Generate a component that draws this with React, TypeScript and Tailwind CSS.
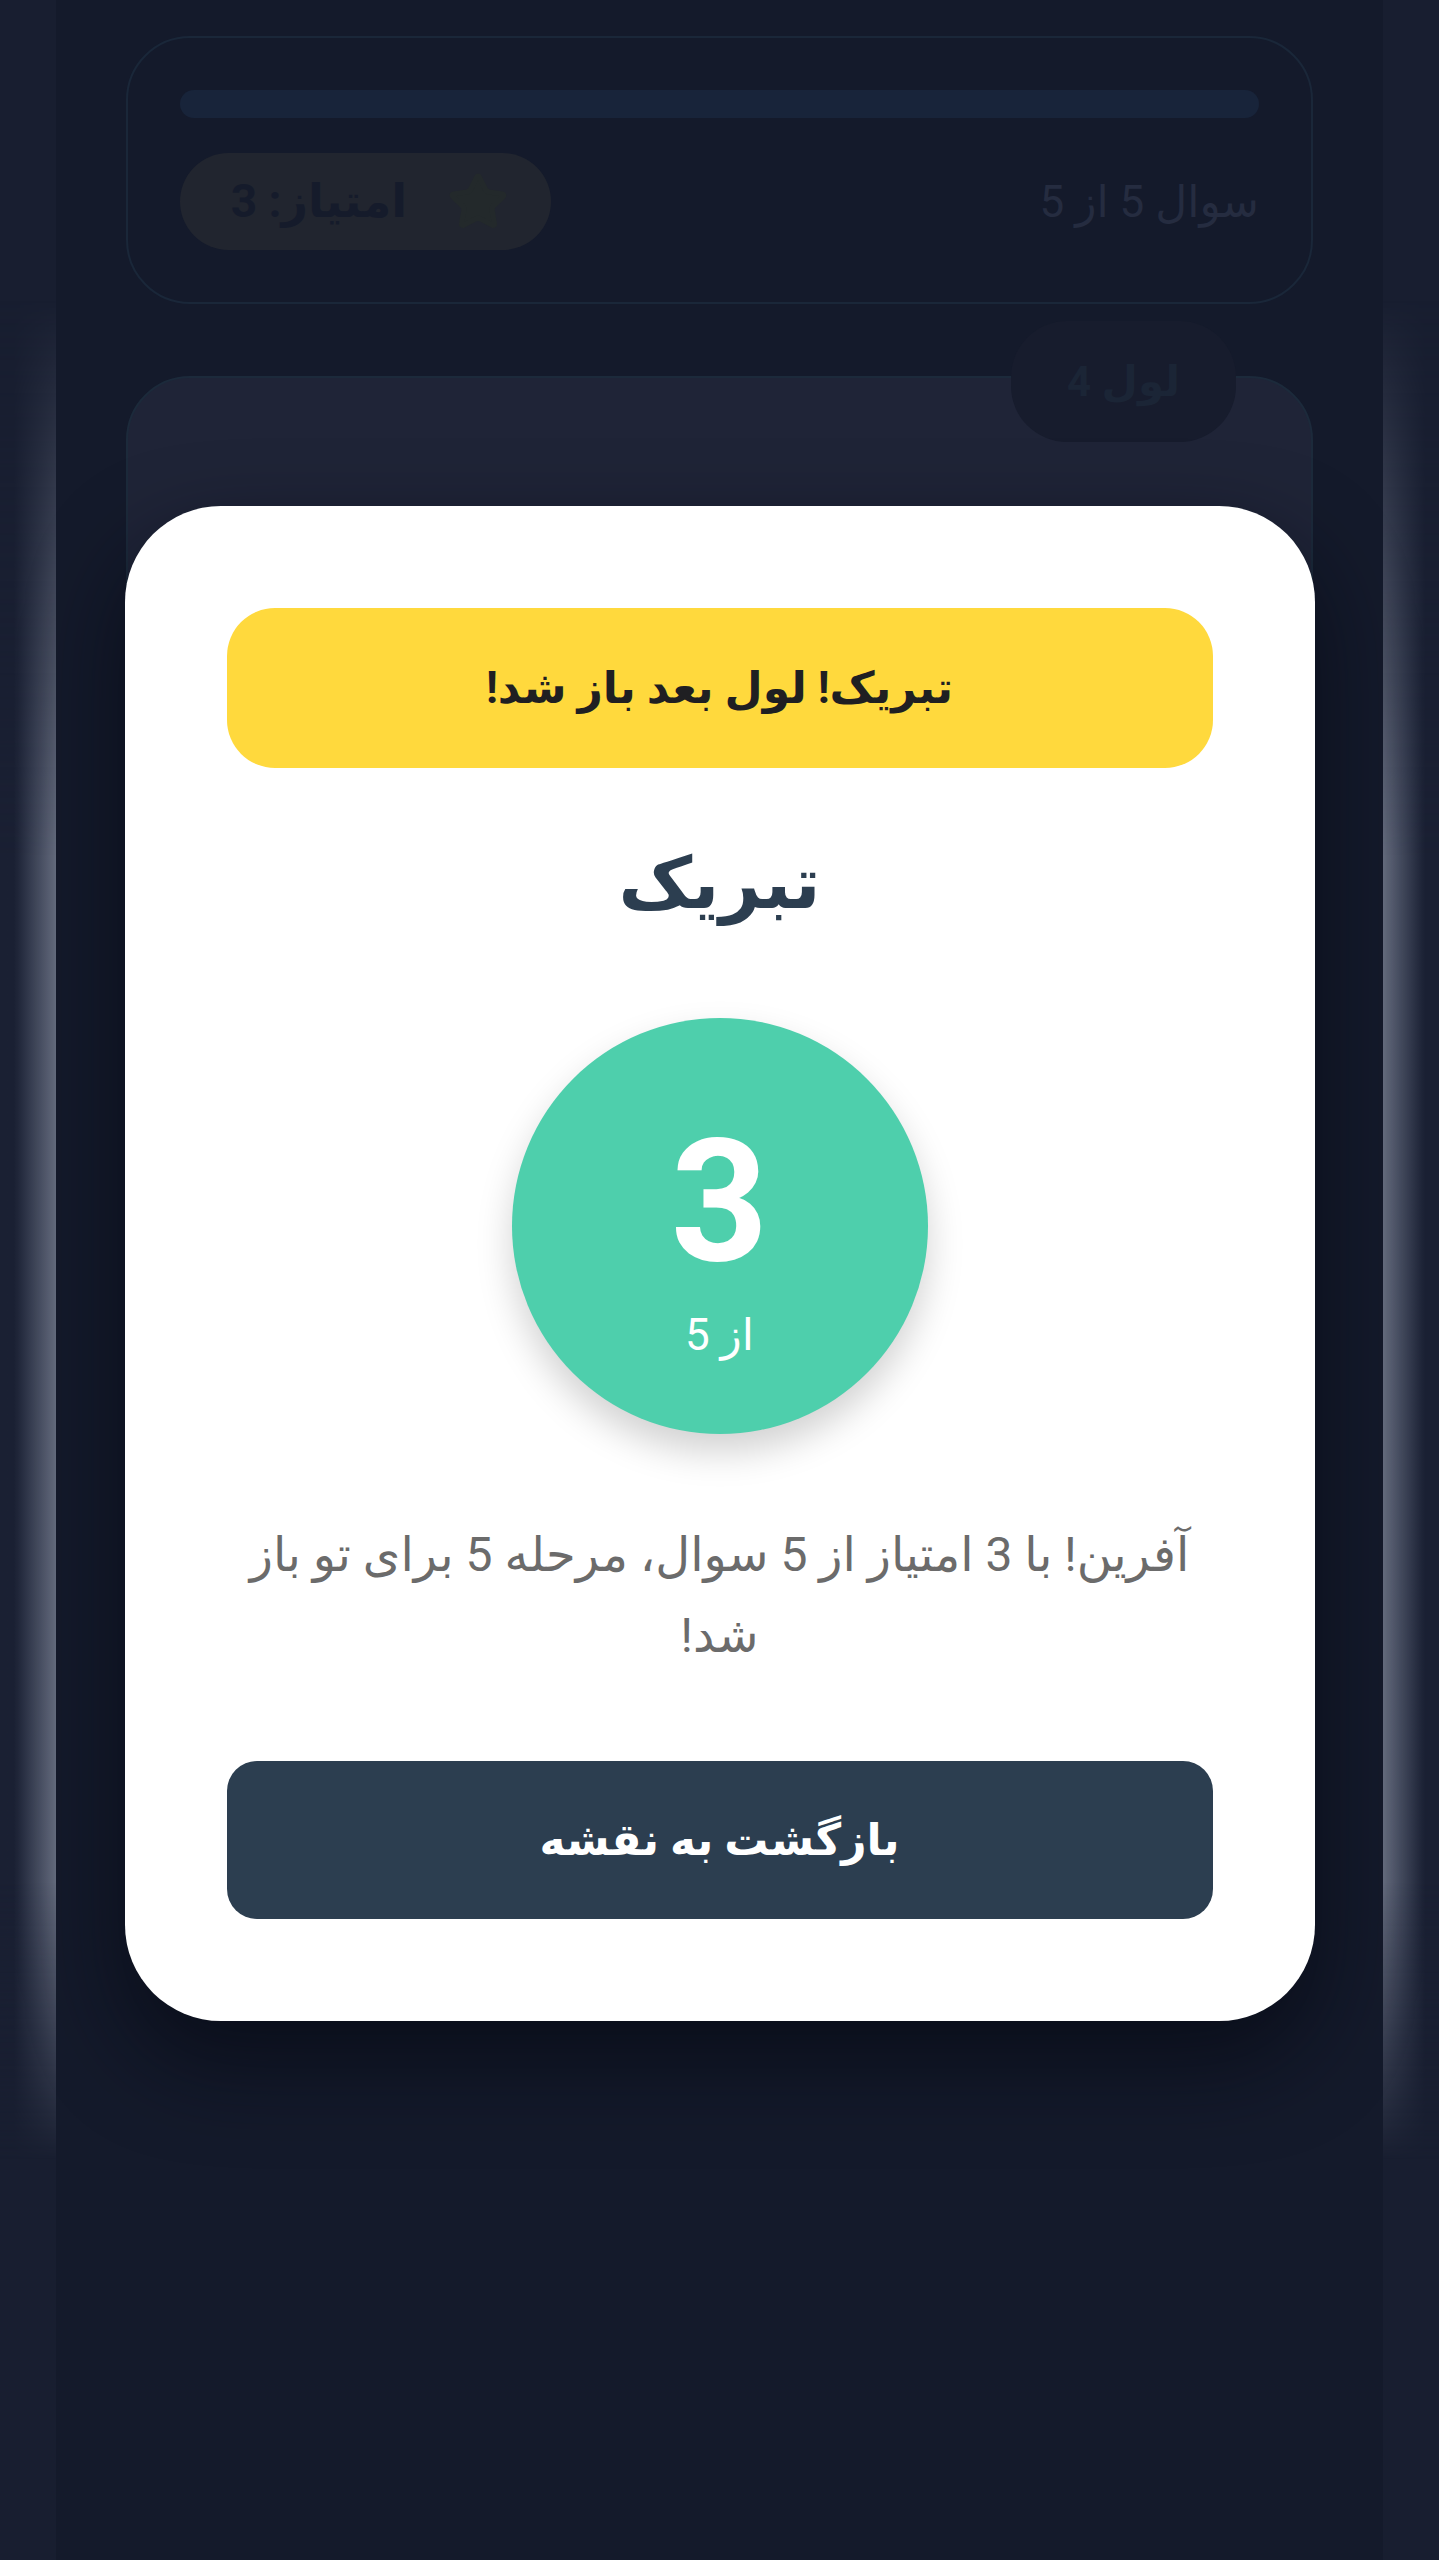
import { Star } from "lucide-react";

const font = "font-['Roboto','DejaVu_Sans',sans-serif]";

function EdgeGlow({ side }: { side: "left" | "right" }) {
  return (
    <div className="w-[56px] shrink-0 pt-[300px]">
      <div
        className={
          side === "left"
            ? "h-[1860px] bg-linear-to-r from-[#1a2033] from-25% to-[#676e81] [mask-image:linear-gradient(to_bottom,transparent,#000_30%,#000_85%,transparent)]"
            : "h-[1860px] bg-linear-to-l from-[#1a2033] from-25% to-[#676e81] [mask-image:linear-gradient(to_bottom,transparent,#000_30%,#000_85%,transparent)]"
        }
      />
    </div>
  );
}

function QuizHeader() {
  return (
    <div className="h-[268px] rounded-[64px] border-2 border-[#1a2739] px-[52px] pt-[52px]">
      <div className="h-[28px] rounded-full bg-[#18243a]" />
      <div className="mt-[35px] flex items-center justify-between">
        <p className="text-[44px] text-[#252c40]">سوال 5 از 5</p>
        <div className="flex h-[97px] w-[371px] items-center gap-[40px] rounded-full bg-[#21252f] px-[42px]">
          <Star className="h-[62px] w-[62px] fill-[#23292b] text-[#23292b]" />
          <span className="text-[46px] font-bold text-[#151b2b]">امتیاز: 3</span>
        </div>
      </div>
    </div>
  );
}

function ResultModal() {
  return (
    <div className="absolute inset-0 flex justify-center pt-[506px]" dir="rtl">
      <div className="flex h-[1515px] w-[1190px] flex-col items-center rounded-[96px] bg-white p-[102px] shadow-[0_40px_90px_rgba(5,8,18,0.7)]">
        <div className="flex h-[160px] w-full items-center justify-center rounded-[48px] bg-[#ffd93d]">
          <p className="text-[44px] font-bold text-[#1f1f22]">تبریک! لول بعد باز شد!</p>
        </div>

        <h2 className="mt-[62px] text-[72px] leading-[108px] font-bold text-[#2c3e50]">تبریک</h2>

        <div className="mt-[80px] flex h-[416px] w-[416px] flex-col items-center justify-center rounded-full bg-[#4ecfac] shadow-[0_18px_36px_rgba(0,0,0,0.18)]">
          <span className="mt-[20px] text-[170px] leading-[190px] font-bold text-white">3</span>
          <span className="mt-[8px] text-[44px] leading-[60px] text-white">از 5</span>
        </div>

        <p className="mt-[80px] text-center text-[48px] leading-[81px] text-[#6b6b6b]">
          آفرین! با 3 امتیاز از 5 سوال، مرحله 5 برای تو باز شد!
        </p>

        <button className="mt-auto flex h-[158px] w-full items-center justify-center rounded-[30px] bg-[#2c3e50] text-[44px] font-bold text-white">
          بازگشت به نقشه
        </button>
      </div>
    </div>
  );
}

export default function App() {
  return (
    <div className={`relative flex min-h-[2560px] w-full bg-[#181e30] ${font}`}>
      <EdgeGlow side="left" />
      <main className="flex-1 bg-[#141a2b] px-[70px] pt-[36px]" dir="rtl">
        <QuizHeader />
        <div className="relative mt-[72px]">
          <div className="h-[1620px] rounded-[64px] border-2 border-[#1c2a3b] bg-[#1f2437]" />
          <div className="absolute right-[77px] top-[-55px] flex h-[121px] w-[225px] items-center justify-center rounded-[56px] bg-[#171c2d]">
            <span className="text-[42px] font-bold text-[#1b2536]">لول 4</span>
          </div>
        </div>
      </main>
      <EdgeGlow side="right" />
      <ResultModal />
    </div>
  );
}
